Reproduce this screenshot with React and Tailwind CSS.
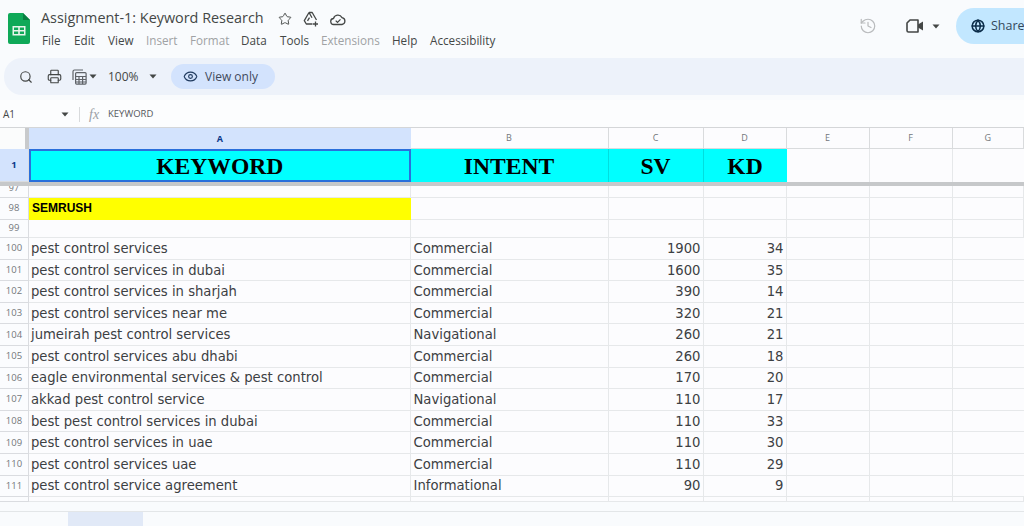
import React from "react";
import { Star, Search, Printer, Eye, History, Globe } from "lucide-react";

const cols = ["w-[198px]", "w-[95px]", "w-[83px]", "w-[83px]", "w-[83px]", "w-[71.5px]"];
const letters = ["B", "C", "D", "E", "F", "G"];

const data = [
  ["100", "pest control services", "Commercial", "1900", "34"],
  ["101", "pest control services in dubai", "Commercial", "1600", "35"],
  ["102", "pest control services in sharjah", "Commercial", "390", "14"],
  ["103", "pest control services near me", "Commercial", "320", "21"],
  ["104", "jumeirah pest control services", "Navigational", "260", "21"],
  ["105", "pest control services abu dhabi", "Commercial", "260", "18"],
  ["106", "eagle environmental services & pest control", "Commercial", "170", "20"],
  ["107", "akkad pest control service", "Navigational", "110", "17"],
  ["108", "best pest control services in dubai", "Commercial", "110", "33"],
  ["109", "pest control services in uae", "Commercial", "110", "30"],
  ["110", "pest control services uae", "Commercial", "110", "29"],
  ["111", "pest control service agreement", "Informational", "90", "9"],
];

const menu = [
  ["File", "text-[#444746]", "w-[32px]"],
  ["Edit", "text-[#444746]", "w-[34px]"],
  ["View", "text-[#444746]", "w-[38px]"],
  ["Insert", "text-[#a0a2a4]", "w-[44px]"],
  ["Format", "text-[#a0a2a4]", "w-[51px]"],
  ["Data", "text-[#444746]", "w-[39px]"],
  ["Tools", "text-[#444746]", "w-[41px]"],
  ["Extensions", "text-[#a0a2a4]", "w-[71px]"],
  ["Help", "text-[#444746]", "w-[38px]"],
  ["Accessibility", "text-[#444746]", "w-[70px]"],
];

function Caret({ className = "" }) {
  return (
    <svg width="8" height="5" viewBox="0 0 8 5" className={className}>
      <path d="M0.5 0.5h7L4 4.5z" fill="#444746" />
    </svg>
  );
}

function Logo() {
  return (
    <svg width="22" height="31" viewBox="0 0 22 31">
      <path d="M2 0h13l7 7v22a2 2 0 0 1-2 2H2a2 2 0 0 1-2-2V2a2 2 0 0 1 2-2z" fill="#0fa958" />
      <path d="M15 0l7 7h-7z" fill="#0a7f42" />
      <path d="M4.500 13h13v9.500h-13z M6 14.500v2.400h4.200v-2.400z M11.800 14.500v2.400H16v-2.400z M6 18.400v2.600h4.200v-2.600z M11.800 18.400v2.600H16v-2.600z" fill="#e8f5ec" fillRule="evenodd" />
    </svg>
  );
}

function DriveAdd() {
  return (
    <svg width="16" height="16" viewBox="0 0 16 16" fill="none" stroke="#444746" strokeWidth="1.3">
      <path d="M6 1.500h3.200l4.300 7.500M6 1.500L1.300 9.600l2 3.400h6.200M6 1.500l3 5.300M4.500 9.800l2-3.200" strokeLinejoin="round" />
      <path d="M12.500 10.500v5M10 13h5" />
    </svg>
  );
}

function CloudDone() {
  return (
    <svg width="16" height="13" viewBox="0 0 16 13" fill="none" stroke="#444746" strokeWidth="1.3">
      <path d="M4 11.500a3 3 0 0 1-.5-6A4.600 4.600 0 0 1 12 4.600a3.500 3.500 0 0 1 0 6.900z" strokeLinejoin="round" />
      <path d="M5.700 7.600l1.800 1.800 3-3" />
    </svg>
  );
}

function Meet() {
  return (
    <svg width="18" height="14" viewBox="0 0 18 14" fill="none">
      <path d="M4 1h8v12H2.500A1.500 1.500 0 0 1 1 11.500V4z" stroke="#444746" strokeWidth="1.6" strokeLinejoin="round" />
      <path d="M12 5.500l5-3v9l-5-3z" fill="#444746" />
    </svg>
  );
}

function SheetIcon() {
  return (
    <svg width="15" height="16" viewBox="0 0 15 16" fill="none" stroke="#5f6368" strokeWidth="1.2">
      <path d="M1 11V2.500A1.500 1.500 0 0 1 2.500 1H11" />
      <rect x="3.600" y="3.600" width="10.500" height="11.500" rx="1" />
      <path d="M3.600 7.500h10.500M3.600 10.500h10.500M3.600 13h10.500M7 7.500v7.500M10.600 7.500v7.500" />
    </svg>
  );
}

function RowHead({ label, h, active }) {
  return (
    <div className={`w-[29px] shrink-0 flex items-center justify-center border-r border-b border-[#dadce0] text-[9.5px] ${h} ${active ? "bg-[#d3e3fd] text-[#0b3a8a] font-bold" : "bg-[#fbfcfe] text-[#73777b]"}`}>
      {label}
    </div>
  );
}

function Filler({ h }) {
  return (
    <>
      {cols.map((c, i) => (
        <div key={i} className={`${c} shrink-0 ${h} border-r border-b border-[#e6e8ea]`} />
      ))}
    </>
  );
}

const dataCell = "shrink-0 pt-[1px] border-r border-b border-[#e6e8ea] flex items-center text-[13.2px] font-['DejaVu_Sans',sans-serif] text-[#3c4043] whitespace-nowrap";
const headCell = "shrink-0 pt-[2px] bg-[#00ffff] flex items-center justify-center font-['Liberation_Serif',serif] font-bold text-[23.6px] text-black";

export default function App() {
  return (
    <div className="w-[1024px] h-[526px] overflow-hidden bg-[#f9fbfd] font-['Open_Sans','Noto_Sans',sans-serif] text-[#3c4043]">
      {/* Title bar */}
      <div className="h-[58px] flex">
        <div className="w-[41px] shrink-0 pl-2 pt-[13px]">
          <Logo />
        </div>
        <div className="w-[730px] shrink-0">
          <div className="h-[32px] pt-[4px] flex items-center">
            <span className="w-[237px] shrink-0 text-[14.400px] text-[#444746] whitespace-nowrap">Assignment-1: Keyword Research</span>
            <div className="flex items-center gap-[11px] pt-[2px]">
              <Star size={14} strokeWidth={1.6} color="#444746" />
              <DriveAdd />
              <CloudDone />
            </div>
          </div>
          <div className="flex h-[18px] items-center pl-px">
            {menu.map(([t, c, w]) => (
              <span key={t} className={`${w} shrink-0 text-[11.700px] whitespace-nowrap ${c}`}>{t}</span>
            ))}
          </div>
        </div>
        <div className="flex-1 flex items-start pt-[8px]">
          <div className="ml-[88px] mt-[9px]">
            <History size={18} strokeWidth={1.6} color="#b9bbbd" />
          </div>
          <div className="ml-[29px] mt-[11px] flex items-center gap-[8px]">
            <Meet />
            <Caret />
          </div>
          <div className="ml-[16px] w-[90px] h-[36px] shrink-0 rounded-l-full bg-[#c2e7ff] flex items-center pl-[15px] gap-[6px] text-[12.500px] text-[#33475b]">
            <Globe size={14} strokeWidth={2.6} color="#0b2d4a" />
            <span>Share</span>
          </div>
        </div>
      </div>

      {/* Toolbar */}
      <div className="h-[37px] ml-1 rounded-l-[18px] bg-[#edf2fa] flex items-center">
        <Search size={14} strokeWidth={2} color="#444746" className="ml-[15px]" />
        <Printer size={15} strokeWidth={1.8} color="#444746" className="ml-[14px]" />
        <div className="ml-[10px]"><SheetIcon /></div>
        <Caret className="ml-[2px]" />
        <span className="ml-[11px] w-[38px] text-[12px] text-[#444746]">100%</span>
        <Caret className="ml-[3px]" />
        <div className="ml-[14px] h-[25px] w-[104px] rounded-full bg-[#d3e3fd] flex items-center pl-[12px] gap-[7px] text-[12px] text-[#3f4a5c]">
          <Eye size={15} strokeWidth={1.8} color="#1f3a5f" />
          <span>View only</span>
        </div>
      </div>

      {/* Formula bar */}
      <div className="mt-[5px] h-[27px] pt-[2px] flex items-center bg-[#fcfdfe]">
        <span className="w-[61px] pl-[3px] text-[10px] text-[#444746]">A1</span>
        <Caret />
        <div className="ml-[10px] w-px h-[15px] bg-[#d8dadc]" />
        <span className="ml-[9px] w-[19px] text-[14px] leading-none italic font-['Liberation_Serif',serif] text-[#9aa0a6]">fx</span>
        <span className="text-[9.500px] text-[#55585c]">KEYWORD</span>
      </div>

      {/* Grid */}
      <div className="bg-[#fcfcfe]">
        {/* Column heads */}
        <div className="flex h-[22px] border-t border-[#d4d6d8]">
          <div className="w-[29px] shrink-0 bg-[#fbfcfc] border-r-[4px] border-[#c8cacc]" />
          <div className="w-[381.5px] shrink-0 bg-[#d3e3fd] flex items-center justify-center text-[9px] font-bold text-[#0b3a8a]">A</div>
          {cols.map((c, i) => (
            <div key={i} className={`${c} shrink-0 flex items-center justify-center text-[9px] text-[#73777b] border-r border-b border-[#d9dbdd]`}>
              {letters[i]}
            </div>
          ))}
        </div>

        {/* Frozen row 1 */}
        <div className="flex h-[33px]">
          <RowHead label="1" h="h-[33px]" active />
          <div className={`${headCell} w-[381.5px] border-2 border-[#2a6fdb]`}>KEYWORD</div>
          <div className={`${headCell} w-[198px] border-r border-[#00dede]`}>INTENT</div>
          <div className={`${headCell} w-[95px] border-r border-[#00dede]`}>SV</div>
          <div className={`${headCell} w-[83px]`}>KD</div>
          <div className="w-[83px] shrink-0 border-r border-[#e6e8ea]" />
          <div className="w-[83px] shrink-0 border-r border-[#e6e8ea]" />
          <div className="w-[71.5px] shrink-0" />
        </div>
        <div className="h-[4px] bg-[#c6c8ca]" />

        {/* Row 97 */}
        <div className="flex h-[12px] overflow-hidden">
          <div className="w-[29px] shrink-0 h-[12px] border-r border-b border-[#dadce0] bg-[#fbfcfe] text-[9px] leading-[4px] text-center text-[#73777b]">97</div>
          <div className="w-[381.5px] shrink-0 h-[12px] border-r border-b border-[#e6e8ea]" />
          <Filler h="h-[12px]" />
        </div>
        {/* Row 98 */}
        <div className="flex h-[22px]">
          <RowHead label="98" h="h-[22px]" />
          <div className="w-[381.5px] shrink-0 h-[22px] pb-[2px] bg-[#ffff00] flex items-center pl-[3px] font-['Liberation_Sans',sans-serif] font-bold text-[12px] text-black">SEMRUSH</div>
          <Filler h="h-[22px]" />
        </div>
        {/* Row 99 */}
        <div className="flex h-[18px]">
          <RowHead label="99" h="h-[18px]" />
          <div className="w-[381.5px] shrink-0 h-[18px] border-r border-b border-[#e6e8ea]" />
          <Filler h="h-[18px]" />
        </div>
        {/* Data */}
        {data.map(([n, k, intent, sv, kd]) => (
          <div key={n} className="flex h-[21.6px]">
            <RowHead label={n} h="h-[21.6px]" />
            <div className={`${dataCell} w-[381.5px] pl-[2px]`}>{k}</div>
            <div className={`${dataCell} w-[198px] pl-[3px]`}>{intent}</div>
            <div className={`${dataCell} w-[95px] justify-end pr-[2px]`}>{sv}</div>
            <div className={`${dataCell} w-[83px] justify-end pr-[2px]`}>{kd}</div>
            <div className={`${dataCell} w-[83px]`} />
            <div className={`${dataCell} w-[83px]`} />
            <div className="w-[71.5px] shrink-0 border-b border-[#e6e8ea]" />
          </div>
        ))}
        {/* Trailing partial row */}
        <div className="flex h-[5px]">
          <RowHead label="" h="h-[5px]" />
          <div className="w-[381.5px] shrink-0 h-[5px] border-r border-b border-[#e6e8ea]" />
          <Filler h="h-[5px]" />
        </div>
      </div>

      {/* Bottom */}
      <div className="h-[10px] bg-[#f9fbfd] border-b border-[#e3e6e8]" />
      <div className="h-[14px] flex bg-[#f9fbfd]">
        <div className="ml-[68px] w-[75px] h-[14px] bg-[#e1e9f7]" />
      </div>
    </div>
  );
}
